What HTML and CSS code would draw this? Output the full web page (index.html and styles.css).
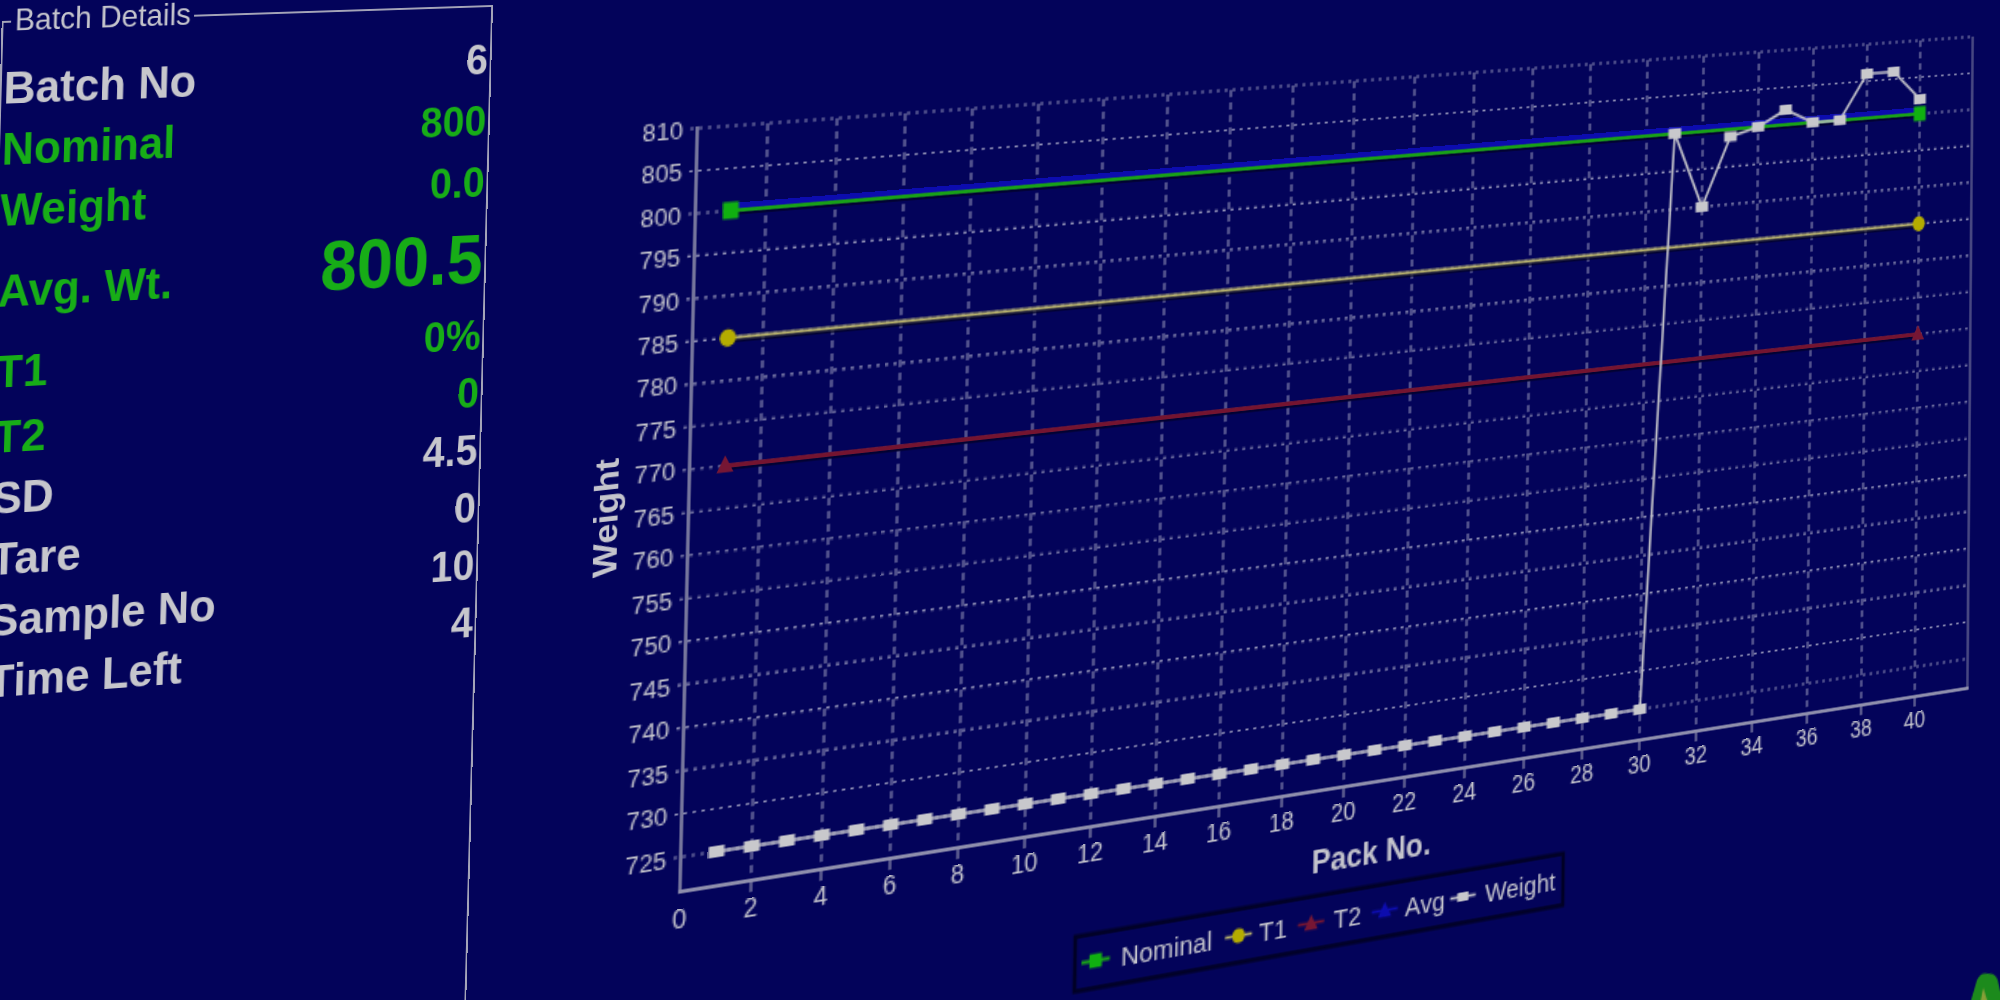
FILE: index.html
```html
<!DOCTYPE html>
<html lang="en">
<head>
<meta charset="utf-8">
<title>Batch Details – Weight Chart</title>
<link rel="stylesheet" href="styles.css">
</head>
<body>
<div class="stage">

  <fieldset class="batch">
    <legend>Batch Details</legend>
    <div class="rows">
      <div class="labels">
        <div class="lbl grey">Batch No</div>
        <div class="lbl green">Nominal</div>
        <div class="lbl green">Weight</div>
        <div class="lbl green avg">Avg. Wt.</div>
        <div class="lbl green t1">T1</div>
        <div class="lbl green t2">T2</div>
        <div class="lbl grey">SD</div>
        <div class="lbl grey">Tare</div>
        <div class="lbl grey">Sample No</div>
        <div class="lbl grey">Time Left</div>
      </div>
      <div class="values">
        <div class="val grey">6</div>
        <div class="val green">800</div>
        <div class="val green">0.0</div>
        <div class="val green big">800.5</div>
        <div class="val green tight pct">0%</div>
        <div class="val green tight">0</div>
        <div class="val grey tight">4.5</div>
        <div class="val grey tight">0</div>
        <div class="val grey tight">10</div>
        <div class="val grey tight">4</div>
      </div>
    </div>
  </fieldset>

  <div class="chart">
    <svg width="1300" height="720" viewBox="0 0 1300 720" xmlns="http://www.w3.org/2000/svg">
      <!-- horizontal grid -->
      <g class="grid-h">
        <line x1="396" x2="1240" y1="100" y2="100"/>
        <line x1="396" x2="1240" y1="122.47" y2="122.47"/>
        <line x1="396" x2="1240" y1="144.94" y2="144.94"/>
        <line x1="396" x2="1240" y1="167.42" y2="167.42"/>
        <line x1="396" x2="1240" y1="189.89" y2="189.89"/>
        <line x1="396" x2="1240" y1="212.36" y2="212.36"/>
        <line x1="396" x2="1240" y1="234.83" y2="234.83"/>
        <line x1="396" x2="1240" y1="257.30" y2="257.30"/>
        <line x1="396" x2="1240" y1="279.78" y2="279.78"/>
        <line x1="396" x2="1240" y1="302.25" y2="302.25"/>
        <line x1="396" x2="1240" y1="324.72" y2="324.72"/>
        <line x1="396" x2="1240" y1="347.19" y2="347.19"/>
        <line x1="396" x2="1240" y1="369.66" y2="369.66"/>
        <line x1="396" x2="1240" y1="392.13" y2="392.13"/>
        <line x1="396" x2="1240" y1="414.61" y2="414.61"/>
        <line x1="396" x2="1240" y1="437.08" y2="437.08"/>
        <line x1="396" x2="1240" y1="459.55" y2="459.55"/>
        <line x1="396" x2="1240" y1="482.02" y2="482.02"/>
      </g>
      <!-- vertical grid -->
      <g class="grid-v">
        <line x1="440" x2="440" y1="100" y2="500"/>
        <line x1="480" x2="480" y1="100" y2="500"/>
        <line x1="520" x2="520" y1="100" y2="500"/>
        <line x1="560" x2="560" y1="100" y2="500"/>
        <line x1="600" x2="600" y1="100" y2="500"/>
        <line x1="640" x2="640" y1="100" y2="500"/>
        <line x1="680" x2="680" y1="100" y2="500"/>
        <line x1="720" x2="720" y1="100" y2="500"/>
        <line x1="760" x2="760" y1="100" y2="500"/>
        <line x1="800" x2="800" y1="100" y2="500"/>
        <line x1="840" x2="840" y1="100" y2="500"/>
        <line x1="880" x2="880" y1="100" y2="500"/>
        <line x1="920" x2="920" y1="100" y2="500"/>
        <line x1="960" x2="960" y1="100" y2="500"/>
        <line x1="1000" x2="1000" y1="100" y2="500"/>
        <line x1="1040" x2="1040" y1="100" y2="500"/>
        <line x1="1080" x2="1080" y1="100" y2="500"/>
        <line x1="1120" x2="1120" y1="100" y2="500"/>
        <line x1="1160" x2="1160" y1="100" y2="500"/>
        <line x1="1200" x2="1200" y1="100" y2="500"/>
      </g>
      <!-- x ticks -->
      <g class="tick">
        <line x1="440" x2="440" y1="500" y2="506"/>
        <line x1="480" x2="480" y1="500" y2="506"/>
        <line x1="520" x2="520" y1="500" y2="506"/>
        <line x1="560" x2="560" y1="500" y2="506"/>
        <line x1="600" x2="600" y1="500" y2="506"/>
        <line x1="640" x2="640" y1="500" y2="506"/>
        <line x1="680" x2="680" y1="500" y2="506"/>
        <line x1="720" x2="720" y1="500" y2="506"/>
        <line x1="760" x2="760" y1="500" y2="506"/>
        <line x1="800" x2="800" y1="500" y2="506"/>
        <line x1="840" x2="840" y1="500" y2="506"/>
        <line x1="880" x2="880" y1="500" y2="506"/>
        <line x1="920" x2="920" y1="500" y2="506"/>
        <line x1="960" x2="960" y1="500" y2="506"/>
        <line x1="1000" x2="1000" y1="500" y2="506"/>
        <line x1="1040" x2="1040" y1="500" y2="506"/>
        <line x1="1080" x2="1080" y1="500" y2="506"/>
        <line x1="1120" x2="1120" y1="500" y2="506"/>
        <line x1="1160" x2="1160" y1="500" y2="506"/>
        <line x1="1200" x2="1200" y1="500" y2="506"/>
      </g>
      <!-- plot frame -->
      <line class="frame" x1="1240" x2="1240" y1="100" y2="500"/>
      <line class="axis" x1="400" x2="400" y1="99" y2="501"/>
      <line class="axis axis-x" x1="399" x2="1241" y1="500" y2="500"/>

      <!-- y labels -->
      <g class="ylab">
        <text x="392" y="104.7">810</text>
        <text x="392" y="127.2">805</text>
        <text x="392" y="149.6">800</text>
        <text x="392" y="172.1">795</text>
        <text x="392" y="194.6">790</text>
        <text x="392" y="217.1">785</text>
        <text x="392" y="239.5">780</text>
        <text x="392" y="262">775</text>
        <text x="392" y="284.5">770</text>
        <text x="392" y="307">765</text>
        <text x="392" y="329.4">760</text>
        <text x="392" y="351.9">755</text>
        <text x="392" y="374.4">750</text>
        <text x="392" y="396.8">745</text>
        <text x="392" y="419.3">740</text>
        <text x="392" y="441.8">735</text>
        <text x="392" y="464.2">730</text>
        <text x="392" y="486.7">725</text>
      </g>
      <!-- x labels -->
      <g class="xlab">
        <text x="400" y="519.5">0</text>
        <text x="440" y="519.5">2</text>
        <text x="480" y="519.5">4</text>
        <text x="520" y="519.5">6</text>
        <text x="560" y="519.5">8</text>
        <text x="600" y="519.5">10</text>
        <text x="640" y="519.5">12</text>
        <text x="680" y="519.5">14</text>
        <text x="720" y="519.5">16</text>
        <text x="760" y="519.5">18</text>
        <text x="800" y="519.5">20</text>
        <text x="840" y="519.5">22</text>
        <text x="880" y="519.5">24</text>
        <text x="920" y="519.5">26</text>
        <text x="960" y="519.5">28</text>
        <text x="1000" y="519.5">30</text>
        <text x="1040" y="519.5">32</text>
        <text x="1080" y="519.5">34</text>
        <text x="1120" y="519.5">36</text>
        <text x="1160" y="519.5">38</text>
        <text x="1200" y="519.5">40</text>
      </g>
      <text class="title" x="819" y="546">Pack No.</text>
      <text class="title" x="354" y="306.5" transform="rotate(-90 354 300)">Weight</text>

      <!-- series: Avg -->
      <line class="s-avg" x1="420" x2="1200" y1="142.7" y2="142.7"/>
      <!-- series: T2 -->
      <line class="shadow" x1="420" x2="1200" y1="281.3" y2="281.3"/>
      <line class="s-t2" x1="420" x2="1200" y1="279.78" y2="279.78"/>
      <polygon class="m-t2" points="420,274.3 424.8,283.3 415.2,283.3"/>
      <polygon class="m-t2" points="1200,274.3 1204.8,283.3 1195.2,283.3"/>
      <!-- series: T1 -->
      <line class="shadow" x1="420" x2="1200" y1="213.9" y2="213.9"/>
      <line class="s-t1" x1="420" x2="1200" y1="212.36" y2="212.36"/>
      <circle class="m-t1" cx="420" cy="212.36" r="4.6"/>
      <circle class="m-t1" cx="1200" cy="212.36" r="4.6"/>
      <!-- series: Nominal -->
      <line class="shadow" x1="420" x2="1200" y1="146.4" y2="146.4"/>
      <line class="s-nom" x1="420" x2="1200" y1="144.94" y2="144.94"/>
      <rect class="m-nom" x="415.5" y="140.4" width="9" height="9"/>
      <rect class="m-nom" x="1195.5" y="140.4" width="9" height="9"/>
      <!-- series: Weight -->
      <polyline class="s-wt" points="420,482.02 440,482.02 460,482.02 480,482.02 500,482.02 520,482.02 540,482.02 560,482.02 580,482.02 600,482.02 620,482.02 640,482.02 660,482.02 680,482.02 700,482.02 720,482.02 740,482.02 760,482.02 780,482.02 800,482.02 820,482.02 840,482.02 860,482.02 880,482.02 900,482.02 920,482.02 940,482.02 960,482.02 980,482.02 1000,482.02 1020,144.94 1040,189.89 1060,149.44 1080,144.94 1100,135.96 1120,144.94 1140,144.94 1160,117.98 1180,117.98 1200,135.96"/>
      <g class="m-wt">
        <rect x="415.5" y="479" width="9" height="6"/>
        <rect x="435.5" y="479" width="9" height="6"/>
        <rect x="455.5" y="479" width="9" height="6"/>
        <rect x="475.5" y="479" width="9" height="6"/>
        <rect x="495.5" y="479" width="9" height="6"/>
        <rect x="515.5" y="479" width="9" height="6"/>
        <rect x="535.5" y="479" width="9" height="6"/>
        <rect x="555.5" y="479" width="9" height="6"/>
        <rect x="575.5" y="479" width="9" height="6"/>
        <rect x="595.5" y="479" width="9" height="6"/>
        <rect x="615.5" y="479" width="9" height="6"/>
        <rect x="635.5" y="479" width="9" height="6"/>
        <rect x="655.5" y="479" width="9" height="6"/>
        <rect x="675.5" y="479" width="9" height="6"/>
        <rect x="695.5" y="479" width="9" height="6"/>
        <rect x="715.5" y="479" width="9" height="6"/>
        <rect x="735.5" y="479" width="9" height="6"/>
        <rect x="755.5" y="479" width="9" height="6"/>
        <rect x="775.5" y="479" width="9" height="6"/>
        <rect x="795.5" y="479" width="9" height="6"/>
        <rect x="815.5" y="479" width="9" height="6"/>
        <rect x="835.5" y="479" width="9" height="6"/>
        <rect x="855.5" y="479" width="9" height="6"/>
        <rect x="875.5" y="479" width="9" height="6"/>
        <rect x="895.5" y="479" width="9" height="6"/>
        <rect x="915.5" y="479" width="9" height="6"/>
        <rect x="935.5" y="479" width="9" height="6"/>
        <rect x="955.5" y="479" width="9" height="6"/>
        <rect x="975.5" y="479" width="9" height="6"/>
        <rect x="995.5" y="479" width="9" height="6"/>
        <rect x="1015.5" y="141.9" width="9" height="6"/>
        <rect x="1035.5" y="186.9" width="9" height="6"/>
        <rect x="1055.5" y="146.4" width="9" height="6"/>
        <rect x="1075.5" y="141.9" width="9" height="6"/>
        <rect x="1095.5" y="133" width="9" height="6"/>
        <rect x="1115.5" y="141.9" width="9" height="6"/>
        <rect x="1135.5" y="141.9" width="9" height="6"/>
        <rect x="1155.5" y="115" width="9" height="6"/>
        <rect x="1175.5" y="115" width="9" height="6"/>
        <rect x="1195.5" y="133" width="9" height="6"/>
      </g>

      <!-- legend -->
      <rect class="legend-box" x="632" y="558.7" width="316" height="29.7"/>
      <line class="s-nom" x1="636" x2="653.4" y1="573.5" y2="573.5"/>
      <rect class="m-nom" x="640.9" y="569.7" width="7.6" height="7.6"/>
      <text class="leg" x="660.3" y="579">Nominal</text>
      <line class="s-t1 leg-line" x1="725.3" x2="742.3" y1="573.5" y2="573.5"/>
      <circle class="m-t1" cx="733.8" cy="573.5" r="3.9"/>
      <text class="leg" x="746.8" y="579">T1</text>
      <line class="s-t2 leg-line" x1="771.7" x2="788.7" y1="573.5" y2="573.5"/>
      <polygon class="m-t2" points="780.2,568.8 784.6,577.2 775.8,577.2"/>
      <text class="leg" x="794.7" y="579">T2</text>
      <line class="s-avg leg-line" x1="819.7" x2="836.7" y1="573.5" y2="573.5"/>
      <polygon class="m-avg" points="828.2,568.8 832.6,577.2 823.8,577.2"/>
      <text class="leg" x="841.6" y="579">Avg</text>
      <line class="s-wt leg-line" x1="871.6" x2="888.6" y1="573.5" y2="573.5"/>
      <rect class="m-wt-l" x="876.4" y="571" width="7.4" height="5"/>
      <text class="leg" x="894.9" y="579">Weight</text>

      <!-- corner of an on-screen control, bottom right -->
      <path class="corner-blob" d="M1241,700 L1249,679 Q1251,675 1255,675.5 L1260,676.5 Q1263,677 1265,681 L1270,700 Z"/>
      <path class="corner-blob-in" d="M1250,700 L1254,684 L1260,700 Z"/>
    </svg>
  </div>

</div>
</body>
</html>
```

FILE: styles.css
```css
html, body {
  margin: 0;
  padding: 0;
  background: #03035a;
}

body {
  overflow: hidden;
  font-family: "Liberation Sans", Arial, sans-serif;
}

.stage {
  display: grid;
  width: 2000px;
  height: 1000px;
  overflow: hidden;
  background: #03035a;
}

.stage > * {
  grid-area: 1 / 1;
  align-self: start;
  justify-self: start;
}

/* ---------- Batch details panel (flat screen coordinates, then projected) ---------- */
.batch {
  box-sizing: border-box;
  width: 268px;
  height: 600px;
  margin: 0;
  padding: 0 1px;
  min-inline-size: 0;
  border: 1px solid #a4a4b8;
  transform-origin: 0 0;
  transform: matrix3d(1.890899, -0.059116, 0, 0.00011702,
                      -0.054572, 1.971840, 0, -0.0000031521,
                      0, 0, 1, 0,
                      2.191, 3.253, 0, 1.0000284);
}

.batch legend {
  margin-left: 3px;
  padding: 0 2px;
  font-size: 16px;
  line-height: 18px;
  color: #c4c4cc;
}

.rows {
  display: flex;
  justify-content: space-between;
}

.labels {
  display: flex;
  flex-direction: column;
  padding-top: 10px;
}

.values {
  display: flex;
  flex-direction: column;
  align-items: flex-end;
  padding-top: 3.9px;
}

.lbl {
  font-weight: bold;
  font-size: 23.5px;
  line-height: 31px;
  white-space: nowrap;
}

.lbl.avg { margin-top: 10px; }
.lbl.t1  { margin-top: 9.5px; }
.lbl.t2  { margin-top: 2px; }

.val {
  font-weight: bold;
  font-size: 22px;
  line-height: 32px;
  white-space: nowrap;
}

.val.big {
  font-size: 36px;
  line-height: 44px;
  margin-top: 2px;
}

.val.tight { line-height: 30px; }
.val.pct   { margin-top: 3px; }

.green { color: #17ad17; }
.grey  { color: #c6c6cc; }

/* ---------- Chart (flat coordinates, then projected) ---------- */
.chart {
  width: 1300px;
  height: 720px;
  transform-origin: 0 0;
  transform: matrix3d(1.914895, -0.101670, 0, 0.00020103,
                      -0.058293, 1.889100, 0, -0.000021757,
                      0, 0, 1, 0,
                      -62.829, -19.942, 0, 0.921764);
}

.chart svg {
  display: block;
  overflow: visible;
}

.chart text {
  font-family: "Liberation Sans", Arial, sans-serif;
  fill: #c4c4cc;
}

.grid-h line {
  stroke: #8e8eb4;
  stroke-width: 1.1;
  stroke-dasharray: 2 3;
}

.grid-v line {
  stroke: #8e8eb4;
  stroke-width: 1.1;
  stroke-dasharray: 4 3;
}

.tick line {
  stroke: #9a9ab4;
  stroke-width: 1.1;
}

.frame {
  stroke: #8a8aa8;
  stroke-width: 1;
}

.axis {
  stroke: #a6a6b8;
  stroke-width: 1.4;
}

.axis-x {
  stroke: #8e8eac;
  stroke-width: 2;
}

.ylab text {
  font-size: 13.6px;
  text-anchor: end;
}

.xlab text {
  font-size: 14.5px;
  text-anchor: middle;
}

.chart .title {
  font-size: 18.5px;
  font-weight: bold;
  text-anchor: middle;
}

.shadow {
  stroke: #000022;
  stroke-width: 2;
  opacity: 0.7;
}

.s-avg {
  stroke: #0c0cae;
  stroke-width: 3.4;
}

.s-nom {
  stroke: #18a018;
  stroke-width: 2;
}

.s-t1 {
  stroke: #b4ae6a;
  stroke-width: 1.8;
}

.s-t2 {
  stroke: #741430;
  stroke-width: 2.4;
}

.s-wt {
  fill: none;
  stroke: #bdbdc6;
  stroke-width: 1.6;
}

.leg-line { stroke-width: 1.6; }

.m-nom { fill: #10b010; }
.m-t1  { fill: #b4ac00; }
.m-t2  { fill: #761634; }
.m-avg { fill: #0c0cae; }
.m-wt rect, .m-wt-l { fill: #c8c8cc; }

.legend-box {
  fill: none;
  stroke: #000026;
  stroke-width: 2.4;
}

.chart .leg {
  font-size: 15.5px;
}

.corner-blob { fill: #1c8a1c; }
.corner-blob-in { fill: #a4a440; opacity: 0.8; }
```
